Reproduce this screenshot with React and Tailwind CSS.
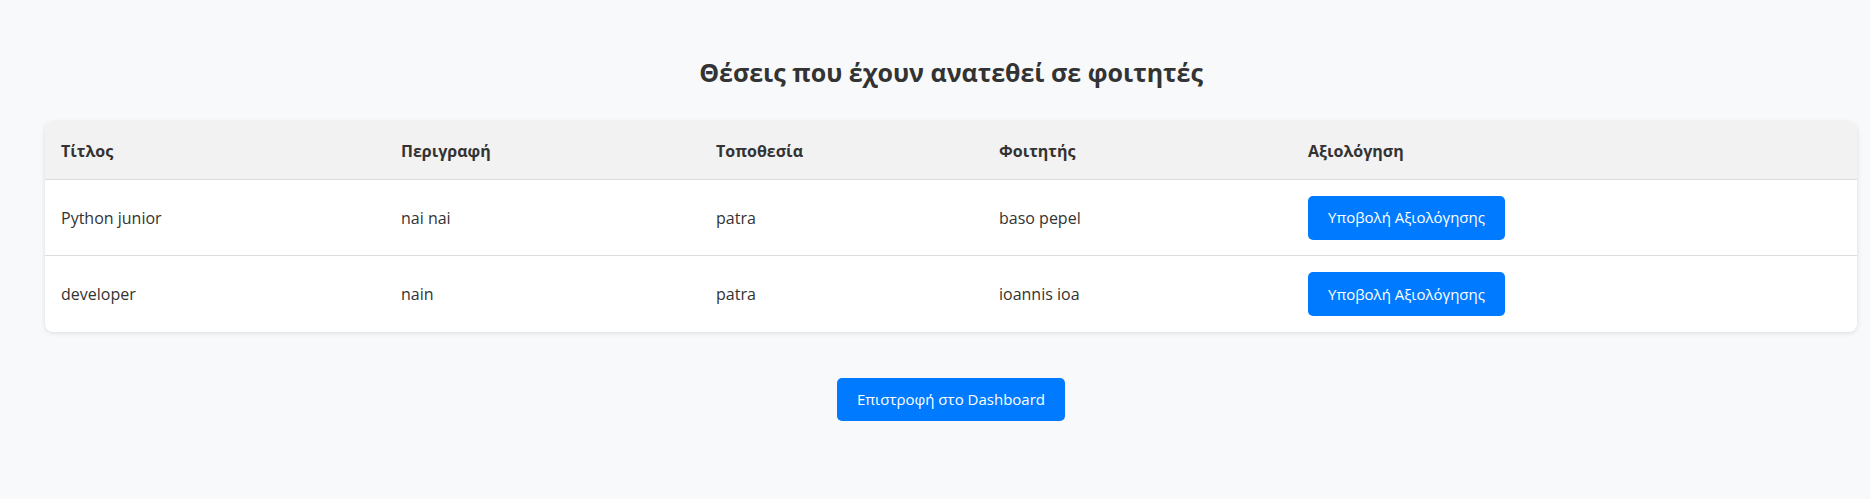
const rows = [
  { title: 'Python junior', desc: 'nai nai', place: 'patra', student: 'baso pepel' },
  { title: 'developer', desc: 'nain', place: 'patra', student: 'ioannis ioa' },
]

const cols = 'grid grid-cols-[340px_315px_283px_309px_1fr] items-center'

export default function App() {
  return (
    <div className="min-h-[499px] bg-[#f8f9fa] text-[#333] font-['Open_Sans',sans-serif]">
      <div className="ml-[45px] w-[1812px] pt-[55px] pb-[79px]">
        <h2 className="text-center text-[25px] leading-[34px] font-bold text-[#333] mb-[33px]">
          Θέσεις που έχουν ανατεθεί σε φοιτητές
        </h2>

        <div className="rounded-lg bg-white shadow-[0_1px_5px_rgba(0,0,0,0.12)] overflow-hidden">
          <div className={`${cols} h-[58px] bg-[#f2f2f2] border-b border-[#dddddd] text-[16px] font-bold`}>
            <div className="px-4">Τίτλος</div>
            <div className="px-4">Περιγραφή</div>
            <div className="px-4">Τοποθεσία</div>
            <div className="px-4">Φοιτητής</div>
            <div className="px-4">Αξιολόγηση</div>
          </div>
          {rows.map((r, i) => (
            <div key={r.title} className={`${cols} h-[76px] text-[16px] ${i < rows.length - 1 ? 'border-b border-[#dddddd]' : ''}`}>
              <div className="px-4">{r.title}</div>
              <div className="px-4">{r.desc}</div>
              <div className="px-4">{r.place}</div>
              <div className="px-4">{r.student}</div>
              <div className="px-4">
                <button className="h-[44px] w-[197px] rounded-[5px] bg-[#007bff] text-white text-[15px]">
                  Υποβολή Αξιολόγησης
                </button>
              </div>
            </div>
          ))}
        </div>

        <div className="flex justify-center mt-[46px]">
          <button className="h-[43px] w-[228px] rounded-[5px] bg-[#007bff] text-white text-[15px]">
            Επιστροφή στο Dashboard
          </button>
        </div>
      </div>
    </div>
  )
}
